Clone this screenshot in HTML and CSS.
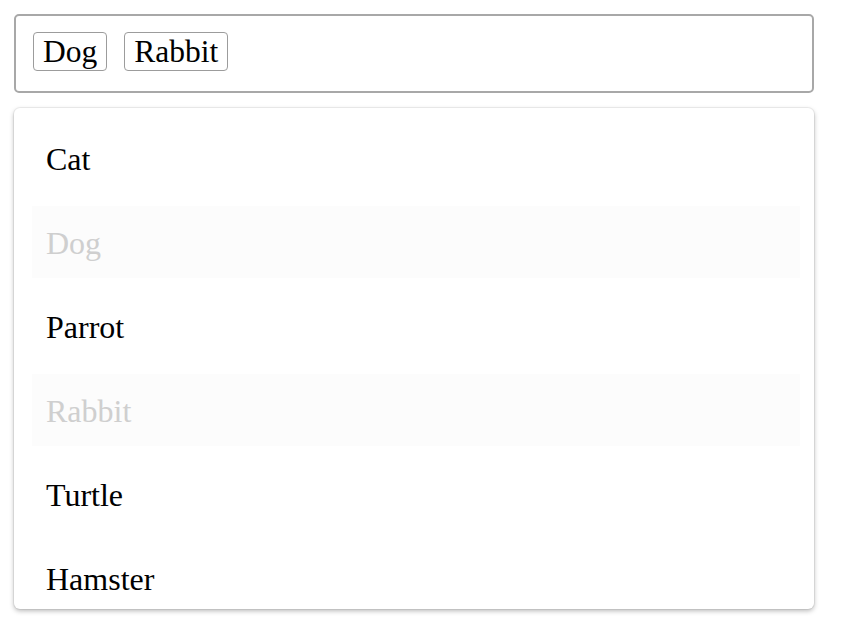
FILE: index.html
```html
<!DOCTYPE html>
<html>
<head>
<meta charset="utf-8">
<link rel="stylesheet" href="styles.css">
</head>
<body>
<div class="picker">
  <div class="field">
    <span class="chip">Dog</span>
    <span class="chip">Rabbit</span>
  </div>
  <ul class="menu">
    <li class="option">Cat</li>
    <li class="option is-disabled">Dog</li>
    <li class="option">Parrot</li>
    <li class="option is-disabled">Rabbit</li>
    <li class="option">Turtle</li>
    <li class="option">Hamster</li>
  </ul>
</div>
</body>
</html>
```
FILE: styles.css
```css
html, body {
  margin: 0;
  padding: 0;
  background: #fff;
}
body {
  font-family: "Liberation Serif", "Times New Roman", serif;
  color: #000;
}
.picker {
  width: 800px;
  padding: 14px;
  display: flex;
  flex-direction: column;
  gap: 15px;
}
.field {
  box-sizing: border-box;
  height: 79px;
  border: 2px solid #a8a8a8;
  border-radius: 5px;
  padding: 16px 16px 16px 17px;
  display: flex;
  align-items: flex-start;
  gap: 17px;
}
.chip {
  font-size: 31.5px;
  line-height: 37px;
  padding: 0 9px;
  border: 1px solid #9c9c9c;
  border-radius: 4px;
}
.menu {
  list-style: none;
  margin: 0;
  box-sizing: border-box;
  height: 501px;
  overflow: hidden;
  padding: 14px 14px 0 18px;
  border-radius: 6px;
  box-shadow: 0 0 0 1px rgba(0,0,0,0.05), 0 2px 5px rgba(0,0,0,0.28);
  display: flex;
  flex-direction: column;
  gap: 12px;
}
.option {
  flex: 0 0 72px;
  box-sizing: border-box;
  display: flex;
  align-items: center;
  padding: 3px 0 0 14px;
  font-size: 32px;
}
.option.is-disabled {
  color: #cfcfcf;
  background: #fcfcfc;
}
```
